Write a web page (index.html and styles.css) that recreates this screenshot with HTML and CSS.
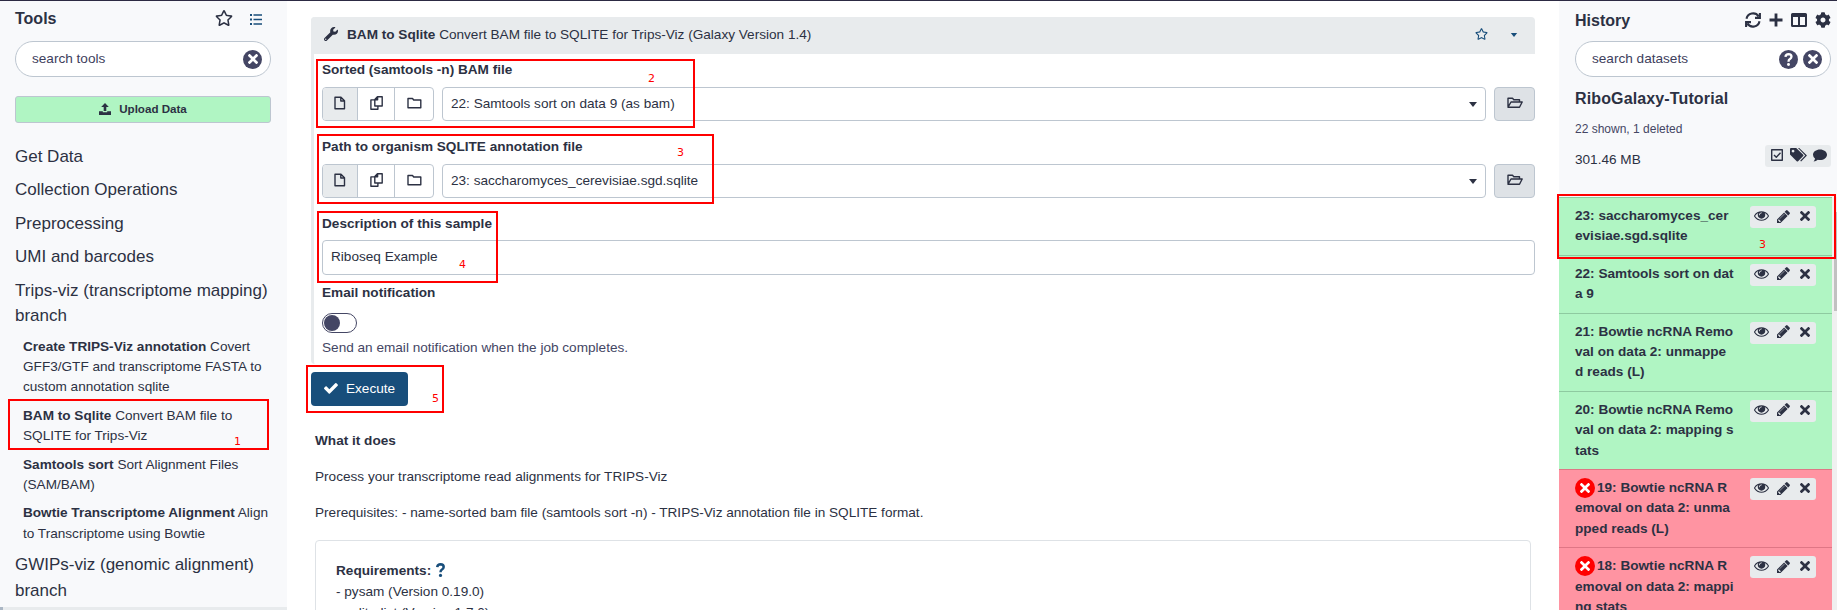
FILE: index.html
```
<!DOCTYPE html>
<html lang="en">
<head>
<meta charset="utf-8">
<title>Galaxy</title>
<link rel="stylesheet" href="styles.css">
</head>
<body>
<svg class="defs" aria-hidden="true">
  <symbol id="star" viewBox="0 0 576 512"><path d="M528.1 171.5L382 150.2 316.7 17.8c-11.7-23.6-45.6-23.9-57.4 0L194 150.2 47.9 171.5c-26.2 3.8-36.7 36.1-17.7 54.6l105.7 103-25 145.5c-4.5 26.3 23.2 46 46.4 33.7L288 439.6l130.7 68.7c23.2 12.2 50.9-7.4 46.4-33.7l-25-145.5 105.7-103c19-18.5 8.5-50.8-17.7-54.6zM388.6 312.3l23.7 138.4L288 385.4l-124.3 65.3 23.7-138.4-100.6-98 139-20.2 62.2-126 62.2 126 139 20.2-100.6 98z"/></symbol>
  <symbol id="list" viewBox="0 0 12 11"><path d="M0 0h2v2H0zM0 4.5h2v2H0zM0 9h2v2H0zM3.5 .2H12v1.5H3.5zM3.500 4.700H12v1.500H3.500zM3.500 9.200H12v1.500H3.500z"/></symbol>
  <symbol id="times" viewBox="0 0 352 352"><path transform="translate(0 -80)" d="M242.72 256l100.07-100.07c12.28-12.28 12.28-32.19 0-44.48l-22.24-22.24c-12.28-12.28-32.19-12.28-44.48 0L176 189.28 75.93 89.21c-12.28-12.28-32.19-12.28-44.48 0L9.210 111.450c-12.280 12.280-12.280 32.190 0 44.480L109.280 256 9.210 356.070c-12.280 12.280-12.280 32.190 0 44.480l22.240 22.240c12.280 12.280 32.200 12.280 44.480 0L176 322.720l100.070 100.070c12.280 12.280 32.200 12.280 44.480 0l22.240-22.240c12.280-12.280 12.280-32.190 0-44.480L242.720 256z"/></symbol>
  <symbol id="upload" viewBox="0 0 12 12"><path d="M6 0l3.800 4H7.300v4H4.700V4H2.200zM0 8.200h3.800v1h4.400v-1H12V12H0z"/></symbol>
  <symbol id="wrench" viewBox="0 0 512 512"><path d="M507.730 109.100c-2.240-9.030-13.540-12.090-20.120-5.510l-74.360 74.360-67.880-11.310-11.310-67.880 74.360-74.360c6.620-6.620 3.430-17.900-5.660-20.160-47.380-11.740-99.550.910-136.580 37.930-39.640 39.640-50.550 97.100-34.050 147.200L18.740 402.760c-24.990 24.990-24.990 65.510 0 90.500 24.990 24.990 65.510 24.990 90.500 0l213.210-213.210c50.120 16.710 107.470 5.680 147.370-34.220 37.070-37.070 49.700-89.320 37.910-136.730zM64 472c-13.250 0-24-10.750-24-24 0-13.260 10.750-24 24-24s24 10.740 24 24c0 13.250-10.750 24-24 24z"/></symbol>
  <symbol id="file" viewBox="0 0 12 14"><path class="line" d="M1 1.300h6L10.500 4.800v8H1zM6.800 1.300v3.700h3.700"/></symbol>
  <symbol id="copy" viewBox="0 0 13 14"><path class="line" d="M4.800 3.400L7.400.800h4.800v9.200H4.800zM7.600 1v2.700H5M4.500 3.900H.900v9.300H7.900V10.200"/></symbol>
  <symbol id="folder" viewBox="0 0 15 12"><path class="line" d="M1 1.500h4.500l1.200 1.500H13.800v7.700H1z"/></symbol>
  <symbol id="folder-open" viewBox="0 0 16 12"><path class="line" d="M1 9.500V1.200h4.500L6.800 2.700h5.700v2.200M1 10.200L4 5H15.200l-2.700 5.300H1z"/></symbol>
  <symbol id="caret" viewBox="0 0 8 5"><path d="M0 0h8L4 5z"/></symbol>
  <symbol id="check" viewBox="120 330 1560 1210"><path d="M1671 566q0 40-28 68l-724 724-136 136q-28 28-68 28t-68-28l-136-136-362-362q-28-28-28-68t28-68l136-136q28-28 68-28t68 28l294 295 656-657q28-28 68-28t68 28l136 136q28 28 28 68z"/></symbol>
  <symbol id="question" viewBox="0 0 9 14"><path class="bold-line" d="M1.200 4.200Q1.600 1.300 4.500 1.300 7.700 1.400 7.700 4 7.600 5.500 6 6.500 4.500 7.300 4.500 9.300"/><circle cx="4.500" cy="12.400" r="1.600"/></symbol>
  <symbol id="sync" viewBox="0 0 16 16"><path class="thick-line" d="M1.500 6.800A6.700 6.700 0 0 1 13.600 4.300M14.900 1v4.900H10M14.500 9.200A6.700 6.700 0 0 1 2.400 11.700M1.100 15v-4.900H6"/></symbol>
  <symbol id="plus" viewBox="0 0 14 14"><path d="M5.600.500h2.800v5.100h5.100v2.800H8.400v5.100H5.600V8.400H.500V5.600h5.100z"/></symbol>
  <symbol id="columns" viewBox="0 0 16 14"><path fill-rule="evenodd" d="M1.500 0h13Q16 0 16 1.500v11q0 1.500-1.500 1.500h-13Q0 14 0 12.500v-11Q0 0 1.500 0zM2 4v8h5V4zM9 4v8h5V4z"/></symbol>
  <symbol id="cog" viewBox="0 0 512 512"><path d="M487.400 315.700l-42.600-24.600c4.300-23.200 4.300-47 0-70.200l42.600-24.600c4.900-2.800 7.100-8.600 5.500-14-11.100-35.600-30-67.800-54.700-94.600-3.800-4.100-10-5.100-14.800-2.300L380.800 110c-17.900-15.400-38.500-27.300-60.800-35.100V25.800c0-5.600-3.900-10.500-9.400-11.700-36.700-8.200-74.300-7.800-109.200 0-5.500 1.200-9.400 6.100-9.400 11.700V75c-22.200 7.900-42.800 19.800-60.800 35.100L88.700 85.500c-4.900-2.800-11-1.900-14.800 2.300-24.700 26.700-43.600 58.900-54.700 94.600-1.700 5.400.6 11.200 5.500 14L67.300 221c-4.300 23.200-4.300 47 0 70.200l-42.600 24.600c-4.900 2.800-7.100 8.600-5.500 14 11.100 35.600 30 67.800 54.700 94.600 3.800 4.100 10 5.100 14.800 2.300l42.600-24.600c17.900 15.400 38.500 27.300 60.800 35.100v49.200c0 5.600 3.900 10.500 9.400 11.700 36.700 8.200 74.300 7.800 109.200 0 5.500-1.200 9.400-6.100 9.400-11.700v-49.200c22.200-7.900 42.800-19.800 60.800-35.100l42.600 24.600c4.900 2.800 11 1.900 14.800-2.300 24.700-26.700 43.600-58.900 54.700-94.600 1.500-5.500-.7-11.300-5.600-14.100zM256 336c-44.100 0-80-35.900-80-80s35.900-80 80-80 80 35.900 80 80-35.900 80-80 80z"/></symbol>
  <symbol id="checkbox" viewBox="0 0 12 12"><path class="line" d="M.7.7h10.600v10.600H.7zM3 5.900l2.300 2.300 4.200-4.400"/></symbol>
  <symbol id="tags" viewBox="0 0 17 14"><path fill-rule="evenodd" d="M1 0h5.200l7 6.700q.6.700 0 1.400l-5.100 5.200q-.7.600-1.400 0L0 6.500V1Q0 0 1 0zM3 1.700a1.400 1.400 0 1 0 .1 0z"/><path d="M8 0h1.200l7.300 6.900q.6.600 0 1.200l-5.400 5.500-.9-.8 5-5.200z"/></symbol>
  <symbol id="comment" viewBox="0 0 14 13"><path d="M7 .500c3.900 0 7 2.400 7 5.300s-3.100 5.300-7 5.300c-.8 0-1.500-.1-2.200-.3Q3 12.500.600 12.500 1.900 11 2 9.500.000 8 0 5.800C0 2.900 3.100.500 7 .500z"/></symbol>
  <symbol id="eye" viewBox="0 384 1792 1152"><path d="M1664 960q-152-236-381-353 61 104 61 225 0 185-131.500 316.500t-316.500 131.500-316.500-131.500-131.500-316.500q0-121 61-225-229 117-381 353 133 205 333.500 326.500t434.500 121.500 434.500-121.500 333.500-326.500zm-720-384q0-20-14-34t-34-14q-125 0-214.500 89.500t-89.500 214.500q0 20 14 34t34 14 34-14 14-34q0-86 61-147t147-61q20 0 34-14t14-34zm848 384q0 34-20 69-140 230-376.500 368.500t-499.500 138.500-499.500-139-376.500-368q-20-35-20-69t20-69q140-229 376.500-368t499.500-139 499.500 139 376.500 368q20 35 20 69z"/></symbol>
  <symbol id="pencil" viewBox="128 136 1528 1528"><path d="M491 1536l91-91-235-235-91 91v107h128v128h107zm523-928q0-22-22-22-10 0-17 7l-542 542q-7 7-7 17 0 22 22 22 10 0 17-7l542-542q7-7 7-17zm-54-192l416 416-832 832h-416v-416zm683 96q0 53-37 90l-166 166-416-416 166-165q36-38 90-38 53 0 91 38l235 234q37 39 37 91z"/></symbol>
</svg>

<div class="app">
  <aside class="tools">
    <header class="panel-head">
      <h2>Tools</h2>
      <svg class="i-star"><use href="#star"/></svg>
      <svg class="i-list"><use href="#list"/></svg>
    </header>
    <div class="search"><span>search tools</span><b class="round"><svg><use href="#times"/></svg></b></div>
    <div class="upload"><svg><use href="#upload"/></svg>Upload Data</div>
    <nav class="sections">
      <div class="section">Get Data</div>
      <div class="section">Collection Operations</div>
      <div class="section">Preprocessing</div>
      <div class="section">UMI and barcodes</div>
      <div class="section">Trips-viz (transcriptome mapping) branch</div>
      <div class="tool"><b>Create TRIPS-Viz annotation</b> Covert GFF3/GTF and transcriptome FASTA to custom annotation sqlite</div>
      <div class="tool"><b>BAM to Sqlite</b> Convert BAM file to SQLITE for Trips-Viz</div>
      <div class="tool"><b>Samtools sort</b> Sort Alignment Files (SAM/BAM)</div>
      <div class="tool"><b>Bowtie Transcriptome Alignment</b> Align to Transcriptome using Bowtie</div>
      <div class="section">GWIPs-viz (genomic alignment) branch</div>
    </nav>
    <div class="panel-foot"></div>
  </aside>

  <main class="center">
    <section class="card">
      <header class="card-head">
        <svg class="i-wrench"><use href="#wrench"/></svg>
        <div class="card-title"><b>BAM to Sqlite</b> Convert BAM file to SQLITE for Trips-Viz (Galaxy Version 1.4)</div>
        <svg class="i-star"><use href="#star"/></svg>
        <svg class="i-caret"><use href="#caret"/></svg>
      </header>
      <div class="form">
        <label>Sorted (samtools -n) BAM file</label>
        <div class="row">
          <div class="group"><span class="active"><svg class="i-file"><use href="#file"/></svg></span><span><svg class="i-copy"><use href="#copy"/></svg></span><span><svg class="i-folder"><use href="#folder"/></svg></span></div>
          <div class="select">22: Samtools sort on data 9 (as bam)<svg><use href="#caret"/></svg></div>
          <div class="browse"><svg><use href="#folder-open"/></svg></div>
        </div>
        <label>Path to organism SQLITE annotation file</label>
        <div class="row">
          <div class="group"><span class="active"><svg class="i-file"><use href="#file"/></svg></span><span><svg class="i-copy"><use href="#copy"/></svg></span><span><svg class="i-folder"><use href="#folder"/></svg></span></div>
          <div class="select">23: saccharomyces_cerevisiae.sgd.sqlite<svg><use href="#caret"/></svg></div>
          <div class="browse"><svg><use href="#folder-open"/></svg></div>
        </div>
        <label>Description of this sample</label>
        <div class="input">Riboseq Example</div>
        <label class="email">Email notification</label>
        <div class="toggle"><i></i></div>
        <div class="hint">Send an email notification when the job completes.</div>
      </div>
    </section>
    <div class="execute"><svg><use href="#check"/></svg>Execute</div>
    <section class="help">
      <p><b>What it does</b></p>
      <p>Process your transcriptome read alignments for TRIPS-Viz</p>
      <p>Prerequisites: - name-sorted bam file (samtools sort -n) - TRIPS-Viz annotation file in SQLITE format.</p>
      <div class="requirements">
        <div><b>Requirements:</b> <svg><use href="#question"/></svg></div>
        <div>- pysam (Version 0.19.0)</div>
        <div>- sqlitedict (Version 1.7.0)</div>
      </div>
    </section>
  </main>

  <aside class="history">
    <div class="history-top">
      <header class="panel-head">
        <h2>History</h2>
        <svg class="i-16"><use href="#sync"/></svg>
        <svg class="i-plus"><use href="#plus"/></svg>
        <svg class="i-columns"><use href="#columns"/></svg>
        <svg class="i-16"><use href="#cog"/></svg>
      </header>
      <div class="search"><span>search datasets</span><b class="round q"><svg><use href="#question"/></svg></b><b class="round"><svg><use href="#times"/></svg></b></div>
      <h2 class="name">RiboGalaxy-Tutorial</h2>
      <div class="counts">22 shown, 1 deleted</div>
      <div class="size"><span>301.46 MB</span><div class="chips meta"><svg class="i-checkbox"><use href="#checkbox"/></svg><svg class="i-tags"><use href="#tags"/></svg><svg class="i-comment"><use href="#comment"/></svg></div></div>
    </div>
    <div class="scroll">
      <div class="datasets">
        <div class="dataset"><div class="title">23: saccharomyces_cer<br>evisiae.sgd.sqlite</div><div class="chips"><svg class="i-eye"><use href="#eye"/></svg><svg class="i-pencil"><use href="#pencil"/></svg><svg class="i-times"><use href="#times"/></svg></div></div>
        <div class="dataset"><div class="title">22: Samtools sort on dat<br>a 9</div><div class="chips"><svg class="i-eye"><use href="#eye"/></svg><svg class="i-pencil"><use href="#pencil"/></svg><svg class="i-times"><use href="#times"/></svg></div></div>
        <div class="dataset"><div class="title">21: Bowtie ncRNA Remo<br>val on data 2: unmappe<br>d reads (L)</div><div class="chips"><svg class="i-eye"><use href="#eye"/></svg><svg class="i-pencil"><use href="#pencil"/></svg><svg class="i-times"><use href="#times"/></svg></div></div>
        <div class="dataset"><div class="title">20: Bowtie ncRNA Remo<br>val on data 2: mapping s<br>tats</div><div class="chips"><svg class="i-eye"><use href="#eye"/></svg><svg class="i-pencil"><use href="#pencil"/></svg><svg class="i-times"><use href="#times"/></svg></div></div>
        <div class="dataset error"><div class="title"><b class="round bad"><svg><use href="#times"/></svg></b>19: Bowtie ncRNA R<br>emoval on data 2: unma<br>pped reads (L)</div><div class="chips"><svg class="i-eye"><use href="#eye"/></svg><svg class="i-pencil"><use href="#pencil"/></svg><svg class="i-times"><use href="#times"/></svg></div></div>
        <div class="dataset error"><div class="title"><b class="round bad"><svg><use href="#times"/></svg></b>18: Bowtie ncRNA R<br>emoval on data 2: mappi<br>ng stats</div><div class="chips"><svg class="i-eye"><use href="#eye"/></svg><svg class="i-pencil"><use href="#pencil"/></svg><svg class="i-times"><use href="#times"/></svg></div></div>
      </div>
      <div class="track"><div class="thumb"></div></div>
    </div>
  </aside>

  <div class="mark m1"><span>1</span></div>
  <div class="mark m2"><span>2</span></div>
  <div class="mark m3"><span>3</span></div>
  <div class="mark m4"><span>4</span></div>
  <div class="mark m5"><span>5</span></div>
  <div class="mark m6"><span>3</span></div>
</div>
</body>
</html>
```
FILE: styles.css
```
* { box-sizing: border-box; }
body {
  margin: 0;
  background: #fff;
  color: #2c3143;
  font: 13.6px/20.4px "Liberation Sans", Arial, sans-serif;
}
svg { display: block; flex: none; fill: currentColor; }
.defs { position: absolute; width: 0; height: 0; }
.line { fill: none; stroke: currentColor; stroke-width: 1.4; stroke-linejoin: round; }
.thick-line { fill: none; stroke: currentColor; stroke-width: 2.1; }
.bold-line { fill: none; stroke: currentColor; stroke-width: 2.5; }
h2 { margin: 0; font-size: 16px; line-height: 24px; font-weight: bold; }

.app {
  position: relative;
  display: flex;
  height: 610px;
  overflow: hidden;
  border-top: 1px solid #2c2a43;
}

/* side panels */
.tools {
  display: flex;
  flex-direction: column;
  flex: none;
  width: 287px;
  background: #f8f9fb;
}
.panel-head { display: flex; align-items: center; height: 40px; padding-left: 15px; flex: none; }
.tools h2 { flex: 1; margin-top: -5px; }
.tools .i-star { width: 18px; height: 16px; margin: -6px 17px 0 0; }
.tools .i-list { width: 12px; height: 11px; margin: -3px 25px 0 0; color: #184e7b; }
.search {
  display: flex;
  align-items: center;
  flex: none;
  height: 36px;
  margin: 0 16px 0 15px;
  padding: 0 8px 0 16px;
  border: 1px solid #bdc6d0;
  border-radius: 18px;
  background: #fff;
  gap: 5px;
}
.search span { flex: 1; margin-top: 1px; color: #3d405c; }
.round {
  display: flex;
  align-items: center;
  justify-content: center;
  flex: none;
  width: 19px;
  height: 19px;
  border-radius: 50%;
  background: #444664;
  color: #fff;
}
.round svg { width: 10px; height: 10px; }
.round.q svg { width: 9px; height: 13px; }
.upload {
  display: flex;
  align-items: center;
  justify-content: center;
  flex: none;
  gap: 8px;
  height: 27px;
  margin: 19px 16px 0 15px;
  border: 1px solid #bdc6d0;
  border-radius: 3px;
  background: #b0f5c3;
  font-size: 11.6px;
  font-weight: bold;
}
.upload svg { width: 12px; height: 12px; margin-top: -2px; }
.sections { display: flex; flex-direction: column; gap: 8px; padding: 20.6px 16px 0 15px; flex: 1; }
.section { font-size: 17px; line-height: 25.5px; }
.tool { padding-left: 8px; }
.panel-foot { flex: none; height: 3px; background: #e8ebed; border-left: 3px solid #aab6c4; }

/* tool form */
.center { flex: none; width: 1272px; padding: 16px 24px 0; }
.card { border-left: 3px solid #e8ebed; border-radius: 4px; height: 347px; }
.card-head {
  display: flex;
  align-items: center;
  height: 37px;
  margin-left: -3px;
  padding: 0 17px 0 13px;
  background: #e8ebed;
  border-radius: 4px 4px 0 0;
}
.i-wrench { width: 14px; height: 14px; margin-top: -3px; }
.card-title { flex: 1; margin: 0 0 0 9px; }
.card-head .i-star { width: 13px; height: 12px; margin: -3px 22px 0 0; color: #184e7b; }
.i-caret { width: 8px; height: 4px; margin-top: -2px; color: #184e7b; }
.form { display: flex; flex-direction: column; padding: 6px 0 0 8px; }
.form label { font-weight: bold; }
.row { display: flex; gap: 8px; height: 34px; margin: 7px 0 15.6px; }
.group { display: flex; width: 112px; border: 1px solid #bdc6d0; border-radius: 4px; overflow: hidden; }
.group span { display: flex; align-items: center; justify-content: center; width: 37px; padding-bottom: 2px; }
.group span + span { border-left: 1px solid #bdc6d0; }
.group span:first-child { width: 34px; }
.group span:last-child { width: 39px; }
.group .active { background: #e8ebed; }
.i-file { width: 12px; height: 14px; }
.i-copy { width: 13px; height: 14px; }
.i-folder { width: 15px; height: 12px; }
.select {
  display: flex;
  flex: 1;
  align-items: center;
  justify-content: space-between;
  padding: 0 8px;
  border: 1px solid #bdc6d0;
  border-radius: 4px;
}
.select svg { width: 8px; height: 5px; }
.browse {
  display: flex;
  align-items: center;
  justify-content: center;
  width: 41px;
  padding-bottom: 2px;
  border: 1px solid #bdc6d0;
  border-radius: 4px;
  background: #dee2e6;
}
.browse svg { width: 16px; height: 12px; }
.input {
  height: 35px;
  margin-top: 6px;
  padding: 6px 8px;
  border: 1px solid #bdc6d0;
  border-radius: 4px;
}
.form .email { margin-top: 8px; }
.toggle { width: 35px; height: 20px; margin-top: 9px; padding: 1px; border: 1px solid #444664; border-radius: 10px; }
.toggle i { display: block; width: 16px; height: 16px; border-radius: 50%; background: #444664; }
.hint { margin-top: 5.6px; color: #444664; }
.execute {
  display: flex;
  align-items: center;
  width: 97px;
  height: 34px;
  margin-top: 8px;
  padding: 0 0 0 13px;
  gap: 8px;
  border-radius: 4px;
  background: #184e7b;
  color: #fff;
}
.execute svg { width: 14px; height: 11px; margin-top: -2px; }
.help { padding: 24.5px 4px 0; }
.help p { margin: 0 0 16px; }
.requirements { height: 120px; padding: 20.5px 20px 0; border: 1px solid #dee2e6; border-radius: 4px; }
.requirements > div { display: flex; gap: 5px; line-height: 20.8px; }
.requirements svg { width: 9px; height: 14px; margin-top: 2px; color: #184e7b; }

/* history */
.history { flex: 1; background: #f8f9fb; }
.history-top { height: 196px; padding-left: 1px; }
.history h2:not(.name) { flex: 1; margin-top: -1px; }
.history .panel-head { padding-right: 6px; }
.i-16 { width: 16px; height: 16px; margin-top: -2px; }
.i-plus { width: 14px; height: 14px; margin: -2px 8px 0; }
.i-columns { width: 16px; height: 14px; margin: -2px 8px 0 0; }
.history .search { margin-right: 6px; }
.name { margin: 10px 0 0 15px; letter-spacing: .13px; }
.counts { margin: 9px 0 0 15px; font-size: 12px; line-height: 18px; color: #444664; }
.size { display: flex; justify-content: space-between; margin: 7px 6px 0 15px; }
.size span { margin-top: 5px; }
.chips { display: flex; align-items: center; width: 66px; height: 22px; border-radius: 3px; background: #e8ebed; color: #2c3143; }
.meta { padding: 0 4px 2px 6px; justify-content: space-between; }
.i-checkbox { width: 12px; height: 12px; }
.i-tags { width: 17px; height: 14px; }
.i-comment { width: 14px; height: 13px; }
.scroll { display: flex; height: 420px; }
.datasets { flex: none; width: 273px; }
.dataset {
  display: flex;
  justify-content: space-between;
  padding: 8px 16px;
  border-top: 1px solid #8ecaa0;
  background: #b0f5c3;
}
.dataset .title { font-weight: bold; white-space: nowrap; }
.dataset.error { border-top-color: #df7685; background: #ff94a2; }
.dataset .chips { padding: 0 0 2px 4px; flex: none; }
.i-eye { width: 15px; height: 10px; }
.i-pencil { width: 13px; height: 13px; margin-left: 8px; }
.i-times { width: 10px; height: 10px; margin-left: 10px; }
.bad { display: inline-flex; width: 20px; height: 20px; margin: 0 2px 0 0; vertical-align: top; background: #f00; }
.track { flex: 1; padding: 15px 0 0 2px; background: #f0f0f0; }
.thumb { height: 99px; background: #c1c1c1; }

/* numbered callouts drawn over the page */
.mark { position: absolute; border: 2px solid #f00; color: #f00; font: 11px/13px "DejaVu Sans", sans-serif; }
.mark span { position: absolute; }
.m1 { left: 8px; top: 398px; width: 261px; height: 51px; }
.m1 span { left: 224px; top: 34px; }
.m2 { left: 316px; top: 58px; width: 379px; height: 69px; }
.m2 span { left: 330px; top: 11px; }
.m3 { left: 317px; top: 133px; width: 397px; height: 70px; }
.m3 span { left: 358px; top: 10px; }
.m4 { left: 317px; top: 210px; width: 181px; height: 72px; }
.m4 span { left: 140px; top: 45px; }
.m5 { left: 306px; top: 364px; width: 138px; height: 48px; }
.m5 span { left: 124px; top: 25px; }
.m6 { left: 1557px; top: 193px; width: 279px; height: 65px; }
.m6 span { left: 200px; top: 42px; }
```
